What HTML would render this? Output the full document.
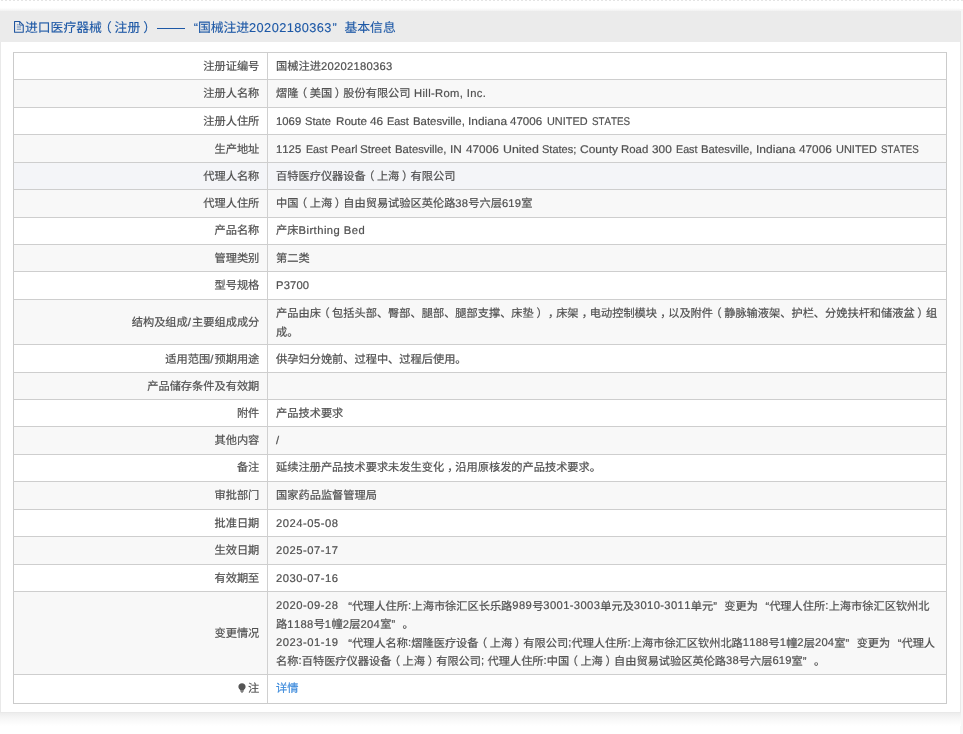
<!DOCTYPE html>
<html lang="zh-CN">
<head>
<meta charset="utf-8">
<title>基本信息</title>
<style>
html,body{margin:0;padding:0;}
body{width:963px;height:734px;position:relative;overflow:hidden;background:#fff;font-family:"Liberation Sans",sans-serif;font-size:11.21px;color:#505050;-webkit-text-stroke:0.2px #505050;text-rendering:geometricPrecision;text-spacing-trim:space-all;font-kerning:none;}
.dots{position:absolute;left:1px;top:0;width:962px;height:1px;background:repeating-linear-gradient(90deg,#e4e4e4 0,#e4e4e4 2px,#fff 2px,#fff 4px);}
.pre{position:absolute;left:0;top:8px;width:960px;height:3px;background:linear-gradient(180deg,#fff 0,#f1f1f1 100%);}
.edge{position:absolute;left:960px;top:9px;width:3px;height:725px;background:#f7f7f7;}
.panel{will-change:transform;position:absolute;left:0;top:11px;width:959px;height:701px;background:#fff;border:1px solid #e9e9e9;border-top:none;}
.shadow{position:absolute;left:0;top:712px;width:961px;height:14px;background:linear-gradient(180deg,#e6e6e6 0,#eeeeee 1.500px,#f6f6f6 6px,#ffffff 14px);}
.head{position:absolute;left:-1px;top:0;width:960px;height:31px;background:#ebebeb;color:#1d58a6;-webkit-text-stroke:0.12px #1d58a6;font-size:12.8px;line-height:31px;white-space:nowrap;}
.head .ic{position:absolute;left:14.2px;top:10.1px;width:9.8px;height:11.8px;}
.head .tt{position:absolute;top:0.8px;}
.head .en{top:0.5px;}
.head .q2{width:auto;}
.head .dash{position:absolute;left:156.6px;top:16.6px;width:28.6px;height:1.2px;background:#1d58a6;}
.tbl{will-change:transform;position:absolute;left:13px;top:0;width:934px;height:734px;}
.r{position:absolute;left:0;width:932px;border-left:1px solid #cbcbcb;border-right:1px solid #cbcbcb;border-top:1px solid #cecece;box-sizing:content-box;background:#fff;}
.r.g{background:#f8f8f8;}
.r.hv{background:#f4f5f8;}
.r{margin-top:0;}
.r .l,.r .v{position:absolute;top:0;bottom:1px;display:flex;align-items:center;line-height:18.3px;white-space:nowrap;}
.r .l{left:0;width:245.3px;padding-right:7.7px;justify-content:flex-end;border-right:1px solid #d0d0d0;bottom:0;}
.r .v{left:254px;padding-left:8.1px;right:0;bottom:0;}
.bb{position:absolute;left:0;top:703px;width:934px;height:1px;background:#cbcbcb;}
.q1,.q2{display:inline-block;width:1em;}
.q1{text-align:right;}
.q2{text-align:left;}
.lnk{color:#3f8cdc;-webkit-text-stroke:0.2px #3f8cdc;}
.bulb{display:inline-block;vertical-align:-0.5px;margin-right:2.3px;}
.en{position:relative;top:0px;}

.p1,.p2,.p3{position:relative;}
.p3{left:0.28em;}
.l .en{letter-spacing:1.2px;}
.p1{left:-0.22em;}
.p2{left:0.24em;}
.gap{display:inline-block;}
.wl{display:inline-block;position:relative;height:18.3px;vertical-align:top;}
.wl .w{position:absolute;top:0px;white-space:nowrap;transform-origin:0 50%;}
.mx .en{top:-0.5px;}
</style>
</head>
<body>
<div class="dots"></div>
<div class="pre"></div>
<div class="edge"></div>
<div class="shadow"></div>
<div class="panel">
<div class="head"><svg class="ic" viewBox="0 0 10 12"><path d="M0.550 0.550h5.300l3.600 3.600v7.300h-8.900z" fill="none" stroke="#1f55a0" stroke-width="1.100" stroke-linejoin="round"/><path d="M5.800 0.700v3.500h3.500" fill="none" stroke="#1f55a0" stroke-width="0.900"/><path d="M2.900 3.900h1.900M2.900 6.100h4.300M2.900 8.400h4.300" stroke="#1f55a0" stroke-opacity="0.750" stroke-width="0.900"/></svg><span class="tt" style="left:25px">进口医疗器械<span class="p1">（</span>注册<span class="p2">）</span></span><span class="dash"></span><span class="tt" style="left:185.1px"><span class="q1">“</span>国械注进<span class="en" style="letter-spacing:0.4px">20202180363</span></span><span class="tt" style="left:332.6px"><span class="q2">”</span></span><span class="tt" style="left:344.5px">基本信息</span></div>
</div>
<div class="tbl">
<div class="r" style="top:52px;height:27px"><div class="l"><span style="position:relative;top:1px">注册证编号</span></div><div class="v"><span style="position:relative;top:1px"><span class="ln mx">国械注进<span class="en" style="letter-spacing:0.277px">20202180363</span></span></span></div></div>
<div class="r g" style="top:79px;height:28px"><div class="l"><span>注册人名称</span></div><div class="v"><span><span class="ln">熠隆<span class="p1">（</span>美国<span class="p2">）</span>股份有限公司<span class="en" style="letter-spacing:0.355px"> Hill-Rom, Inc.</span></span></span></div></div>
<div class="r" style="top:107px;height:27px"><div class="l"><span style="position:relative;top:1px">注册人住所</span></div><div class="v"><span style="position:relative;top:1px"><span class="wl" style="width:354.6px"><span class="w en" style="left:-0.06px;transform:scaleX(1.0110)">1069</span><span class="w en" style="left:29.05px;transform:scaleX(0.9931)">State</span><span class="w en" style="left:59.73px;transform:scaleX(1.0380)">Route</span><span class="w en" style="left:93.82px;transform:scaleX(1.0600)">46</span><span class="w en" style="left:111.26px;transform:scaleX(0.9755)">East</span><span class="w en" style="left:136.64px;transform:scaleX(1.0148)">Batesville,</span><span class="w en" style="left:191.72px;transform:scaleX(1.0626)">Indiana</span><span class="w en" style="left:234.33px;transform:scaleX(1.0314)">47006</span><span class="w en" style="left:271.16px;transform:scaleX(0.9728)">UNITED</span><span class="w en" style="left:316.02px;transform:scaleX(0.8734)">STATES</span></span></span></div></div>
<div class="r g" style="top:134px;height:28px"><div class="l"><span style="position:relative;top:1px">生产地址</span></div><div class="v"><span style="position:relative;top:1px"><span class="wl" style="width:642.8px"><span class="w en" style="left:-0.06px;transform:scaleX(1.0110)">1125</span><span class="w en" style="left:29.58px;transform:scaleX(0.9521)">East</span><span class="w en" style="left:54.44px;transform:scaleX(1.0097)">Pearl</span><span class="w en" style="left:83.83px;transform:scaleX(1.0385)">Street</span><span class="w en" style="left:118.75px;transform:scaleX(1.0068)">Batesville,</span><span class="w en" style="left:174.02px;transform:scaleX(1.0600)">IN</span><span class="w en" style="left:189.72px;transform:scaleX(1.0514)">47006</span><span class="w en" style="left:226.59px;transform:scaleX(1.1058)">United</span><span class="w en" style="left:265.86px;transform:scaleX(0.9830)">States;</span><span class="w en" style="left:303.61px;transform:scaleX(1.0727)">County</span><span class="w en" style="left:345.04px;transform:scaleX(1.0196)">Road</span><span class="w en" style="left:375.92px;transform:scaleX(1.0566)">300</span><span class="w en" style="left:399.47px;transform:scaleX(0.9568)">East</span><span class="w en" style="left:424.85px;transform:scaleX(1.0088)">Batesville,</span><span class="w en" style="left:479.61px;transform:scaleX(1.0739)">Indiana</span><span class="w en" style="left:522.42px;transform:scaleX(1.0514)">47006</span><span class="w en" style="left:559.56px;transform:scaleX(0.9802)">UNITED</span><span class="w en" style="left:604.42px;transform:scaleX(0.8687)">STATES</span></span></span></div></div>
<div class="r hv" style="top:162px;height:27px"><div class="l"><span style="position:relative;top:1px">代理人名称</span></div><div class="v"><span style="position:relative;top:1px"><span class="ln">百特医疗仪器设备<span class="p1">（</span>上海<span class="p2">）</span>有限公司</span></span></div></div>
<div class="r g" style="top:189px;height:28px"><div class="l"><span>代理人住所</span></div><div class="v"><span><span class="ln">中国<span class="p1">（</span>上海<span class="p2">）</span>自由贸易试验区英伦路<span class="en" style="letter-spacing:0.234px">38</span>号六层<span class="en" style="letter-spacing:0.234px">619</span>室</span></span></div></div>
<div class="r" style="top:217px;height:27px"><div class="l"><span>产品名称</span></div><div class="v"><span><span class="ln">产床<span class="en" style="letter-spacing:0.471px">Birthing Bed</span></span></span></div></div>
<div class="r g" style="top:244px;height:27px"><div class="l"><span style="position:relative;top:1px">管理类别</span></div><div class="v"><span style="position:relative;top:1px"><span class="ln">第二类</span></span></div></div>
<div class="r" style="top:271px;height:28px"><div class="l"><span>型号规格</span></div><div class="v"><span><span class="ln"><span class="en" style="letter-spacing:0.140px">P3700</span></span></span></div></div>
<div class="r g" style="top:299px;height:45px"><div class="l"><span style="position:relative;top:1px">结构及组成<span class="en">/</span>主要组成成分</span></div><div class="v"><span style="position:relative;top:1px"><span class="ln">产品由床<span class="p1">（</span>包括头部、臀部、腿部、腿部支撑、床垫<span class="p2">）</span><span class="p3">，</span>床架<span class="p3">，</span>电动控制模块<span class="p3">，</span>以及附件<span class="p1">（</span>静脉输液架、护栏、分娩扶杆和储液盆<span class="p2">）</span>组</span><br><span class="ln">成。</span></span></div></div>
<div class="r" style="top:344px;height:28px"><div class="l"><span style="position:relative;top:1px">适用范围<span class="en">/</span>预期用途</span></div><div class="v"><span style="position:relative;top:1px"><span class="ln">供孕妇分娩前、过程中、过程后使用。</span></span></div></div>
<div class="r g" style="top:372px;height:27px"><div class="l"><span style="position:relative;top:1px">产品储存条件及有效期</span></div><div class="v"><span style="position:relative;top:1px"><span class="ln"></span></span></div></div>
<div class="r" style="top:399px;height:27px"><div class="l"><span style="position:relative;top:1px">附件</span></div><div class="v"><span style="position:relative;top:1px"><span class="ln">产品技术要求</span></span></div></div>
<div class="r g" style="top:426px;height:28px"><div class="l"><span>其他内容</span></div><div class="v"><span><span class="ln"><span class="en">/</span></span></span></div></div>
<div class="r" style="top:454px;height:27px"><div class="l"><span>备注</span></div><div class="v"><span><span class="ln">延续注册产品技术要求未发生变化<span class="p3">，</span>沿用原核发的产品技术要求。</span></span></div></div>
<div class="r g" style="top:481px;height:28px"><div class="l"><span>审批部门</span></div><div class="v"><span><span class="ln">国家药品监督管理局</span></span></div></div>
<div class="r" style="top:509px;height:27px"><div class="l"><span style="position:relative;top:1px">批准日期</span></div><div class="v"><span style="position:relative;top:1px"><span class="ln"><span class="en" style="letter-spacing:0.499px">2024-05-08</span></span></span></div></div>
<div class="r g" style="top:536px;height:28px"><div class="l"><span>生效日期</span></div><div class="v"><span><span class="ln"><span class="en" style="letter-spacing:0.499px">2025-07-17</span></span></span></div></div>
<div class="r" style="top:564px;height:27px"><div class="l"><span style="position:relative;top:1px">有效期至</span></div><div class="v"><span style="position:relative;top:1px"><span class="ln"><span class="en" style="letter-spacing:0.499px">2030-07-16</span></span></span></div></div>
<div class="r g" style="top:591px;height:83px"><div class="l"><span style="position:relative;top:1px">变更情况</span></div><div class="v"><span style="position:relative;top:1px"><span class="ln mx"><span class="en" style="letter-spacing:0.499px">2020-09-28</span><span class="gap" style="width:2.4px"></span><span class="q1">“</span>代理人住所<span class="en" style="letter-spacing:0.369px">:</span>上海市徐汇区长乐路<span class="en" style="letter-spacing:0.369px">989</span>号<span class="en" style="letter-spacing:0.369px">3001-3003</span>单元及<span class="en" style="letter-spacing:0.369px">3010-3011</span>单元<span class="q2">”</span>变更为<span class="q1">“</span>代理人住所<span class="en" style="letter-spacing:0.369px">:</span>上海市徐汇区钦州北</span><br><span class="ln mx">路<span class="en" style="letter-spacing:0.353px">1188</span>号<span class="en" style="letter-spacing:0.353px">1</span>幢<span class="en" style="letter-spacing:0.353px">2</span>层<span class="en" style="letter-spacing:0.353px">204</span>室<span class="q2">”</span>。</span><br><span class="ln mx"><span class="en" style="letter-spacing:0.499px">2023-01-19</span><span class="gap" style="width:2.4px"></span><span class="q1">“</span>代理人名称<span class="en" style="letter-spacing:0.191px">:</span>熠隆医疗设备<span class="p1">（</span>上海<span class="p2">）</span>有限公司<span class="en" style="letter-spacing:0.191px">;</span>代理人住所<span class="en" style="letter-spacing:0.191px">:</span>上海市徐汇区钦州北路<span class="en" style="letter-spacing:0.191px">1188</span>号<span class="en" style="letter-spacing:0.191px">1</span>幢<span class="en" style="letter-spacing:0.191px">2</span>层<span class="en" style="letter-spacing:0.191px">204</span>室<span class="q2">”</span>变更为<span class="q1">“</span>代理人</span><br><span class="ln mx">名称<span class="en" style="letter-spacing:0.145px">:</span>百特医疗仪器设备<span class="p1">（</span>上海<span class="p2">）</span>有限公司<span class="en" style="letter-spacing:0.145px">; </span>代理人住所<span class="en" style="letter-spacing:0.145px">:</span>中国<span class="p1">（</span>上海<span class="p2">）</span>自由贸易试验区英伦路<span class="en" style="letter-spacing:0.145px">38</span>号六层<span class="en" style="letter-spacing:0.145px">619</span>室<span class="q2">”</span>。</span></span></div></div>
<div class="r" style="top:674px;height:29px"><div class="l"><span><svg class="bulb" viewBox="0 0 8 10" width="8" height="10"><path d="M4 0.3C1.9 0.3 0.4 1.8 0.4 3.7c0 1.2 0.6 2.1 1.4 2.9c0.3 0.3 0.5 0.7 0.5 1.1h3.4c0-0.4 0.2-0.8 0.5-1.1c0.8-0.8 1.4-1.7 1.4-2.9C7.600 1.8 6.1 0.3 4 0.3zM2.500 8.200h3v0.700h-3zM3 9.300h2v0.500h-2z" fill="#555"/></svg>注</span></div><div class="v"><span><span class="ln lnk">详情</span></span></div></div>
<div class="bb"></div>
</div>
</body>
</html>
